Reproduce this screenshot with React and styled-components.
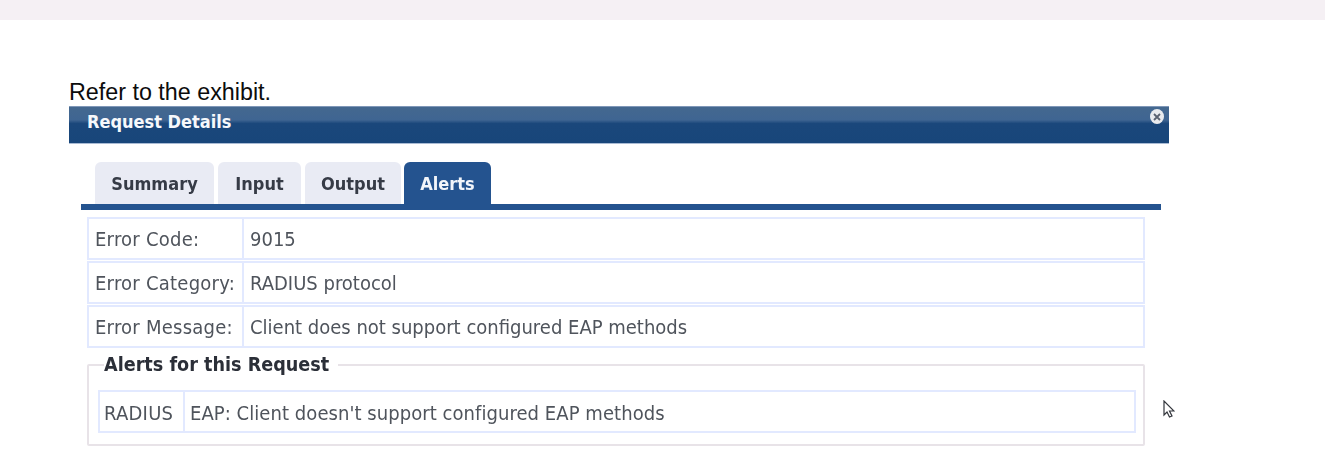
import styled, { createGlobalStyle } from 'styled-components'

const GlobalStyle = createGlobalStyle`
  html, body { margin: 0; padding: 0; background: #fff; }
  body { font-family: "DejaVu Sans", sans-serif; }
`

const Page = styled.main`
  position: relative;
  width: 1325px;
  height: 469px;
  overflow: hidden;
`

const TopStrip = styled.div`
  height: 20px;
  background: #f5f0f4;
`

const Content = styled.div`
  padding: 60px 0 0 69px;
  width: 1100px;
`

const Intro = styled.p`
  margin: 0;
  height: 26px;
  font-family: "Liberation Sans", Arial, sans-serif;
  font-size: 23.3px;
  line-height: 24px;
  color: #0c0c0c;
`

const Dialog = styled.section`
  filter: blur(0.5px);
`

const TitleBar = styled.header`
  display: flex;
  justify-content: space-between;
  height: 38px;
  padding: 0 5px 0 18px;
  box-sizing: border-box;
  background: linear-gradient(#44688f 0, #3f6592 36%, #1a477b 46%, #18467a 100%);
  border-top: 1px solid #7f97b8;
  border-bottom: 1px solid #a9bbd4;
`

const Title = styled.h2`
  margin: 0;
  font-size: 18px;
  font-stretch: condensed;
  line-height: 29px;
  font-weight: 700;
  color: #f6f8fb;
`

const CloseButton = styled.span`
  display: flex;
  align-items: center;
  justify-content: center;
  width: 14px;
  height: 15px;
  margin-top: 2px;
  border-radius: 50%;
  background: #e9ebee;
`

const Body = styled.div`
  padding: 18px 8px 0 12px;
`

const TabBar = styled.nav`
  display: flex;
  gap: 4px;
  height: 42px;
  padding-left: 14px;
  border-bottom: 6px solid #24538f;
`

const Tab = styled.div`
  display: flex;
  align-items: center;
  justify-content: center;
  width: ${({ $w }) => $w}px;
  margin-left: ${({ $active }) => ($active ? '-1px' : '0')};
  border-radius: 6px 6px 0 0;
  font-size: 18px;
  font-stretch: condensed;
  font-weight: 700;
  background: ${({ $active }) => ($active ? '#24538f' : '#e9ebf4')};
  color: ${({ $active }) => ($active ? '#f2f5fa' : '#363b46')};
`

const Rows = styled.div`
  display: flex;
  flex-direction: column;
  gap: 1px;
  margin: 7px 16px 0 6px;
`

const Row = styled.div`
  display: flex;
  height: 43px;
  box-sizing: border-box;
  border: 2px solid #e2e9ff;
`

const Label = styled.div`
  flex: 0 0 ${({ $w }) => $w}px;
  box-sizing: border-box;
  padding-left: ${({ $pad }) => $pad}px;
  border-right: 2px solid #e2e9ff;
  font-size: 20px;
  font-stretch: condensed;
  letter-spacing: 0.25px;
  line-height: 41px;
  color: #4f545c;
  white-space: nowrap;
`

const Value = styled.div`
  flex: 1;
  padding-left: 6px;
  font-size: 20px;
  font-stretch: condensed;
  line-height: 41px;
  color: #4f545c;
  white-space: nowrap;
`

const AlertBox = styled.fieldset`
  margin: 6px 16px 0 6px;
  padding: 0 7px 12px 9px;
  height: 92px;
  box-sizing: border-box;
  border: 2px solid #e8e3e8;
  border-radius: 2px;
`

const AlertLegend = styled.legend`
  margin-left: 6px;
  padding: 0 9px 0 0;
  font-size: 19.6px;
  font-stretch: condensed;
  font-weight: 700;
  line-height: 22px;
  color: #2b2f38;
`

const AlertRow = styled(Row)`
  margin-top: 14px;

  & > div {
    line-height: 43px;
  }
`

const AlertText = styled(Value)`
  letter-spacing: 0.06px;
  padding-left: 5px;
`

const Cursor = styled.svg`
  position: absolute;
  left: 1163px;
  top: 400px;
`

function App() {
  return (
    <Page>
      <GlobalStyle />
      <TopStrip />
      <Content>
        <Intro>Refer to the exhibit.</Intro>
        <Dialog>
          <TitleBar>
            <Title>Request Details</Title>
            <CloseButton>
              <svg width="8" height="8" viewBox="0 0 8 8">
                <path d="M1 1l6 6M7 1l-6 6" stroke="#5a6270" strokeWidth="1.8" />
              </svg>
            </CloseButton>
          </TitleBar>
          <Body>
            <TabBar>
              <Tab $w={119}>Summary</Tab>
              <Tab $w={83}>Input</Tab>
              <Tab $w={96}>Output</Tab>
              <Tab $w={87} $active>Alerts</Tab>
            </TabBar>
            <Rows>
              <Row><Label $w={155} $pad={6}>Error Code:</Label><Value>9015</Value></Row>
              <Row><Label $w={155} $pad={6}>Error Category:</Label><Value>RADIUS protocol</Value></Row>
              <Row><Label $w={155} $pad={6}>Error Message:</Label><Value>Client does not support configured EAP methods</Value></Row>
            </Rows>
            <AlertBox>
              <AlertLegend>Alerts for this Request</AlertLegend>
              <AlertRow><Label $w={85} $pad={4}>RADIUS</Label><AlertText>EAP: Client doesn't support configured EAP methods</AlertText></AlertRow>
            </AlertBox>
          </Body>
        </Dialog>
      </Content>
      <Cursor width="12" height="19" viewBox="0 0 12 19">
        <path d="M1 1v14l3-3 2.500 5 2.500-1-2.500-5h4.500z" fill="#fff" stroke="#33363c" strokeWidth="1.2" />
      </Cursor>
    </Page>
  )
}

export default App
